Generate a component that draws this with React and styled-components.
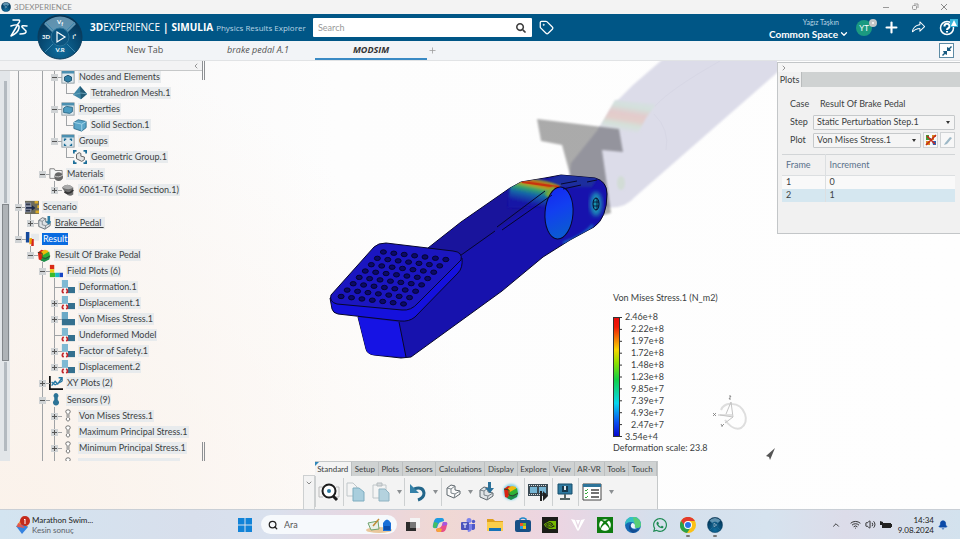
import React from 'react';
import styled, { createGlobalStyle, css } from 'styled-components';
import { FaSearch, FaWhatsapp, FaXbox } from 'react-icons/fa';
import { PiShareFat } from 'react-icons/pi';
import { SiNvidia } from 'react-icons/si';
import {
  Bell,
  ChevronDown,
  ChevronLeft,
  ChevronRight,
  ChevronUp,
  Plus,
  Search,
  Tag,
  Volume2,
  Wifi,
} from 'lucide-react';

/* Tree guides, one character per 12px column:
   | line, T tee, L elbow, + - toggles on a running line, p m toggles ending it */
const treeRows = [
  { guides: '| |-', icon: 'mesh', label: 'Nodes and Elements' },
  { guides: '| ||L', icon: 'tetra', label: 'Tetrahedron Mesh.1' },
  { guides: '| |-', icon: 'props', label: 'Properties' },
  { guides: '| ||L', icon: 'cube', label: 'Solid Section.1' },
  { guides: '| |m', icon: 'groups', label: 'Groups' },
  { guides: '| | L', icon: 'geom', label: 'Geometric Group.1' },
  { guides: '| m', icon: 'materials', label: 'Materials', gap: true },
  { guides: '|  p', icon: 'sphere', label: '6061-T6 (Solid Section.1)' },
  { guides: '-', icon: 'scenario', label: 'Scenario', gap: true },
  { guides: '|p', icon: 'pedal', label: 'Brake Pedal ', underline: true },
  { guides: 'm', icon: 'result', label: 'Result', selected: true },
  { guides: ' m', icon: 'rainbow', label: 'Result Of Brake Pedal' },
  { guides: '  -', icon: 'field', label: 'Field Plots (6)' },
  { guides: '  |T', icon: 'plot', label: 'Deformation.1' },
  { guides: '  |+', icon: 'plot', label: 'Displacement.1' },
  { guides: '  |+', icon: 'plotOn', label: 'Von Mises Stress.1' },
  { guides: '  |T', icon: 'plot', label: 'Undeformed Model' },
  { guides: '  |+', icon: 'plot', label: 'Factor of Safety.1' },
  { guides: '  |p', icon: 'plot', label: 'Displacement.2' },
  { guides: '  +', icon: 'xy', label: 'XY Plots (2)' },
  { guides: '  -', icon: 'sensors', label: 'Sensors (9)', gap: true },
  { guides: '  |+', icon: 'sensor', label: 'Von Mises Stress.1' },
  { guides: '  |+', icon: 'sensor', label: 'Maximum Principal Stress.1' },
  { guides: '  |+', icon: 'sensor', label: 'Minimum Principal Stress.1' },
  { guides: '  |+', icon: 'sensor', label: '' },
];

const legendValues = [
  '2.46e+8',
  '2.22e+8',
  '1.97e+8',
  '1.72e+8',
  '1.48e+8',
  '1.23e+8',
  '9.85e+7',
  '7.39e+7',
  '4.93e+7',
  '2.47e+7',
  '3.54e+4',
];

const sections = [
  'Standard',
  'Setup',
  'Plots',
  'Sensors',
  'Calculations',
  'Display',
  'Explore',
  'View',
  'AR-VR',
  'Tools',
  'Touch',
];

const Window = () => (
  <>
    <rect x="1" y="1" width="14" height="14" fill="#dfe9ee" stroke="#8b979e" />
    <rect x="1" y="1" width="14" height="3" fill="#4b8fb0" />
  </>
);

const Cube = () => (
  <>
    <path d="M1 5l5-3 9 2v7l-5 4-9-3z" fill="#5aa5c8" stroke="#2d6b8b" />
    <path d="M1 5l9 2 5-3M10 7v8" fill="none" stroke="#a9d8ec" />
  </>
);

const Bracket = ({ fill = '#dfe3e6' }) => (
  <>
    <path
      d="M2 5l4-3 4 1v4l5 1v3l-6 4-7-3z"
      fill={fill}
      stroke="#5d666c"
      strokeLinejoin="round"
    />
    <path d="M2 5l4 1v4l4 1 5-3M6 6l4-3M10 11l-1 4" fill="none" stroke="#7b848a" />
  </>
);

const RainbowPart = () => (
  <>
    <path d="M1 5l4-3 4 1-2 12-5-2z" fill="#d92313" />
    <path d="M5 4l4-2 4 1v3l-5 3-2 4z" fill="#f0b90c" />
    <path d="M7 8l7-4 1 6-6 5-4-1z" fill="#2eb135" />
    <path d="M6 12l9-3-1 4-6 3-4-2z" fill="#1b8f4a" />
    <path d="M1 5l5 1v5l4 1 5-3" fill="none" stroke="#30402a" />
  </>
);

const treeIcons = {
  mesh: (
    <>
      <Window />
      <path d="M4 8l4-2 4 2v4l-4 2-4-2z" fill="#2f7fa6" stroke="#1b4f6b" />
    </>
  ),
  tetra: (
    <>
      <path d="M8 0l8 9-7 6-9-5z" fill="#3f86a6" />
      <path d="M8 0l1 15 7-6z" fill="#235a75" />
      <path d="M0 10l9-2 7 1" stroke="#6fa6bd" fill="none" />
    </>
  ),
  props: (
    <>
      <Window />
      <path d="M3 7l3-2 7 1v5l-3 2-7-1z" fill="#4d9dc2" stroke="#276481" />
    </>
  ),
  cube: <Cube />,
  groups: (
    <>
      <Window />
      <path
        d="M4 8V6h2M10 6h2v2M12 11v2h-2M6 13H4v-2"
        fill="none"
        stroke="#1c6e98"
        strokeWidth="1.500"
      />
    </>
  ),
  geom: (
    <>
      <path
        d="M1 4V1h3M12 1h3v3M15 12v3h-3M4 15H1v-3"
        fill="none"
        stroke="#1c6e98"
        strokeWidth="2"
      />
      <path d="M4 5l3-2 2 1v3l4 1v3l-3 2-6-3z" fill="#e4e4e4" stroke="#555" />
    </>
  ),
  materials: (
    <>
      <path d="M1 2h5l1 2h8v9H1z" fill="#f6f6f6" stroke="#777" />
      <circle cx="11" cy="11" r="5" fill="#666" />
      <path d="M6 10q5 3 10-1" stroke="#d5d5d5" fill="none" />
    </>
  ),
  sphere: (
    <>
      <path d="M1 5q6-6 13 0v8q-5 4-9-2z" fill="#6d6d6d" />
      <path d="M1 5q6-6 13 0-5 4-13 0z" fill="#aaa" />
      <path d="M4 10q5 4 10-2" stroke="#333" fill="none" strokeWidth="2" />
    </>
  ),
  scenario: (
    <>
      <rect y="1" width="16" height="15" fill="#6b6a5c" />
      <path d="M0 3h7v11H0z" fill="#8e96ad" />
      <path d="M1 5h5M1 12h5" stroke="#333a4a" strokeWidth="2" />
      <path d="M1 8h7V6l4 3-4 3v-2H1z" fill="#1d2a4c" />
      <path d="M11 1h4v3h-4zM12 12h4v3h-4zM14 6h2v3h-2z" fill="#d9aa2a" />
    </>
  ),
  pedal: (
    <>
      <Bracket />
      <path d="M12 0h3v6h2l-4 4-3-4h2z" fill="#2d7ca4" />
    </>
  ),
  result: (
    <>
      <rect x="7" y="2" width="9" height="8" fill="#e6e9ec" />
      <path d="M1 0h4v12H1z" fill="#174a9c" />
      <path d="M5 7h3v7H5z" fill="#e8a20e" />
      <path d="M8 8h2v8H7z" fill="#d3221a" />
    </>
  ),
  rainbow: <RainbowPart />,
  field: (
    <>
      <path d="M1 1h5v5H1z" fill="#d92a16" />
      <path d="M1 6h5v4H1z" fill="#eccb13" />
      <path d="M1 10h6v5H1z" fill="#3ab92e" />
      <path d="M7 10h5v5H7z" fill="#1cb9c6" />
      <path d="M12 10h4v5h-4z" fill="#1746c4" />
    </>
  ),
  plot: (
    <>
      <path d="M1 0h7v9H1z" fill="#7fb9d3" />
      <path d="M8 8h8v7H8z" fill="#34708f" />
      <path d="M3 10q-3 3 0 5M6 10q3 3 0 5" stroke="#c3262b" fill="none" strokeWidth="2" />
    </>
  ),
  plotOn: (
    <>
      <path d="M1 0h7v8h8v7H1z" fill="#34708f" />
      <path d="M1 0h7v8H1z" fill="#6ba9c6" />
    </>
  ),
  xy: (
    <>
      <path d="M1 0v15h15" stroke="#111" strokeWidth="2" fill="none" />
      <path
        d="M3 11l4-5 3 3 5-7M3 7l4 3 8-4M11 2h4v4"
        stroke="#2477a2"
        strokeWidth="1.500"
        fill="none"
      />
    </>
  ),
  sensors: (
    <path d="M8 0a3 3 0 0 1 2 5v3a3.500 3.500 0 1 1-4 0V5a3 3 0 0 1 2-5z" fill="#2d7497" />
  ),
  sensor: (
    <path
      d="M8 1a2 2 0 0 1 1 4v5a2 2 0 1 1-2 0V5a2 2 0 0 1 1-4z"
      fill="#fff"
      stroke="#666"
    />
  ),
};

const CompassIcon = ({ id }) => (
  <svg viewBox="0 0 46 46" width="100%" height="100%" aria-hidden="true">
    <defs>
      <radialGradient id={id} cx="50%" cy="80%" r="80%">
        <stop offset="0" stopColor="#0f6c9c" />
        <stop offset="0.6" stopColor="#07476f" />
        <stop offset="1" stopColor="#042f4e" />
      </radialGradient>
    </defs>
    <circle cx="23" cy="23" r="22" fill={`url(#${id})`} stroke="#0b3c5c" />
    <path d="M7 10a21 21 0 0 1 32 0L30 19a9 9 0 0 0-14 0z" fill="#7fb0cb" opacity="0.750" />
    <circle cx="23" cy="23" r="9" fill="#0c5580" stroke="#2b7298" />
    <path d="M8 8l8 8M38 8l-8 8M8 38l8-8M38 38l-8-8" stroke="#3b86ad" />
    <path d="M20 18l8 5-8 5z" fill="none" stroke="#fff" strokeWidth="1.200" />
  </svg>
);

const padHoles = [];
for (let r = 0; r < 8; r++) {
  for (let c = 0; c < 7; c++) {
    padHoles.push({ x: 383.4 + c * 10.4 - r * 6.04, y: 252 + c * 1.25 + r * 6.35 });
  }
}

const PedalScene = () => (
  <Scene viewBox="206 61 571 400" preserveAspectRatio="xMidYMid slice" role="img" aria-label="Brake pedal">
    <defs>
      <filter id="soft"><feGaussianBlur stdDeviation="1" /></filter>
      <filter id="glow"><feGaussianBlur stdDeviation="2" /></filter>
      <linearGradient id="band" gradientUnits="userSpaceOnUse" x1="541" y1="177" x2="534" y2="211">
        <stop offset="0" stopColor="#3f9a68" />
        <stop offset="0.120" stopColor="#9aa32f" />
        <stop offset="0.200" stopColor="#d0370f" />
        <stop offset="0.280" stopColor="#b7a51c" />
        <stop offset="0.380" stopColor="#38a767" />
        <stop offset="0.550" stopColor="#1466a8" />
        <stop offset="0.850" stopColor="#1512a6" />
      </linearGradient>
      <linearGradient id="ghostBand" gradientUnits="userSpaceOnUse" x1="628" y1="95" x2="622" y2="132">
        <stop offset="0" stopColor="#dcdce9" />
        <stop offset="0.300" stopColor="#d3e1dc" />
        <stop offset="0.500" stopColor="#e3cbcc" />
        <stop offset="0.650" stopColor="#e3cecb" />
        <stop offset="0.800" stopColor="#d4e1d9" />
        <stop offset="1" stopColor="#dcdce9" />
      </linearGradient>
      <linearGradient id="hole" x1="0" y1="0" x2="0.300" y2="1">
        <stop offset="0" stopColor="#1425f0" />
        <stop offset="0.500" stopColor="#123ff0" />
        <stop offset="1" stopColor="#0b59d4" />
      </linearGradient>
      <clipPath id="bodyClip">
        <path d="M428 248L510 188 521 182 545 178 561 175 595 178Q607 181 607 194 607 218 594 227L570 240 543 257 411 358 372 355 358 317z" />
      </clipPath>
    </defs>
    <path
      d="M663 59L633 85 615 103 600 127 571 163 568 185 605 207Q624 210 636 196L780 70V59z"
      fill="#dcdce9"
      filter="url(#soft)"
    />
    <path
      d="M615 100L606 116 598 130 638 133 646 118 656 104z"
      fill="url(#ghostBand)"
      filter="url(#soft)"
    />
    <path d="M720 61Q672 88 655 106M654 114Q670 130 666 150" stroke="#d7d7e5" fill="none" />
    <ellipse cx="621" cy="183" rx="4" ry="7" fill="#d2dcd6" filter="url(#soft)" />
    <path
      d="M537 119L619 129 623 152 602 150 611 213 604 215 571 178 562 145 541 141z"
      fill="#000"
      opacity="0.320"
      filter="url(#soft)"
    />
    <path
      d="M428 248L461 222 510 188 521 182 545 178 561 175 595 178Q607 181 607 194 607 218 594 227L570 240 543 257 502 291 411 357 401 358 374 355Q367 354 366 349L358 317z"
      fill="#1712ad"
      stroke="#07072b"
    />
    <g clipPath="url(#bodyClip)">
      <path d="M428 248L510 188 521 182 545 178 561 185 495 231 457 258z" fill="#19149c" />
      <path d="M508 208L510 186 524 177 562 184 550 206z" fill="url(#band)" filter="url(#soft)" />
      <path d="M548 180L562 174 598 177 592 187 563 187z" fill="#1e2f9e" filter="url(#soft)" />
      <path d="M522 182L559 187" stroke="#c8330f" strokeWidth="2" />
      <path d="M553 186l-8 8 4 4 8-8z" fill="#7da83e" filter="url(#soft)" />
      <ellipse cx="596" cy="204" rx="6" ry="12" fill="#1a8db8" filter="url(#glow)" />
      <path
        d="M563 243q20-6 30-18"
        stroke="#195fc4"
        strokeWidth="3"
        fill="none"
        filter="url(#soft)"
      />
    </g>
    <ellipse
      cx="559"
      cy="213"
      rx="14"
      ry="26"
      fill="url(#hole)"
      stroke="#07072b"
      transform="rotate(4 559 213)"
    />
    <ellipse cx="596" cy="204" rx="3" ry="6" fill="#1792ae" stroke="#07072b" />
    <path d="M593 202h6M593 206h6M597 198v12" stroke="#07072b" strokeWidth="0.800" />
    <path
      d="M457 258L495 231M497 227L545 191M502 230L552 195M561 184l16-3M563 189l18-4M587 182l10-2"
      stroke="#07072b"
      fill="none"
    />
    <path d="M358 317L399 322 406 357 374 355Q367 354 366 349z" fill="#1613e4" />
    <path d="M399 322L406 357" stroke="#07072b" />
    <path
      d="M330 298L332 309Q333 313 338 314L400 321Q409 322 415 317L458 273Q463 268 462 258z"
      fill="#1511dc"
      stroke="#07072b"
    />
    <path
      d="M331 295L374 247Q378 243 386 243L453 251Q463 252 461 260L418 303Q411 311 402 310L337 304Q329 302 331 295z"
      fill="#1b16c0"
      stroke="#07072b"
    />
    {padHoles.map((h, i) => (
      <ellipse key={i} cx={h.x} cy={h.y} rx="3" ry="2.200" fill="#0b0968" stroke="#050530" />
    ))}
    <g fill="none" stroke="#dedede">
      <path d="M721 410q3-7 11-6 9 0 13 10 3 9-4 14-8 3-16-8" strokeWidth="2" />
      <path d="M731 402l-5 12M731 402l2 15-13-2M733 417l-8 6M718 415h14" stroke="#c4c4c4" />
      <path
        d="M729 396h2l-2 3h2M713 413l3 3M716 413l-3 3M721 424l1 2 2-2M722 426v1"
        stroke="#777"
        strokeWidth="0.800"
      />
    </g>
    <path d="M775 448l-9 8 3 1 1 3z" fill="#555" />
  </Scene>
);

const Caret = () => (
  <svg width="5" height="4" viewBox="0 0 5 4" aria-hidden="true">
    <path d="M0 0h5L2.500 4z" fill="#8b8f92" />
  </svg>
);

const Tool = ({ label, width = 22, children }) => (
  <ToolButton aria-label={label} $width={width}>
    <svg width={width} height="22" viewBox={`0 0 ${width} 22`} aria-hidden="true">
      {children}
    </svg>
  </ToolButton>
);

const toggles = '+-pm';

const TreeRow = ({ row }) => (
  <Row $gap={row.gap}>
    {row.guides.split('').map((g, i) => (
      <Guide key={i} $kind={g}>
        {toggles.includes(g) && (
          <Toggle aria-label="Toggle">
            <svg width="7" height="7" viewBox="0 0 7 7">
              <path d={g === '+' || g === 'p' ? 'M1 3.500h5M3.500 1v5' : 'M1 3.500h5'} stroke="#555" />
            </svg>
          </Toggle>
        )}
      </Guide>
    ))}
    <NodeIcon viewBox="0 0 16 16">{treeIcons[row.icon]}</NodeIcon>
    <NodeLabel $selected={row.selected} $underline={row.underline} $empty={!row.label}>
      {row.label}
    </NodeLabel>
  </Row>
);

const App = () => {
  return (
    <>
      <GlobalStyle />
      <Page>
        <TitleBar>
          <TitleIcon><CompassIcon id="cmpSmall" /></TitleIcon>
          <span>3DEXPERIENCE</span>
          <WindowButtons>
            <PlainButton aria-label="Minimize">
              <svg width="8" height="8"><path d="M1 4.500h6" stroke="#999" /></svg>
            </PlainButton>
            <PlainButton aria-label="Restore">
              <svg width="8" height="8" fill="none" stroke="#999">
                <rect x="1.500" y="2.500" width="4" height="4" rx="1" />
                <path d="M3 1h4v4" />
              </svg>
            </PlainButton>
            <PlainButton aria-label="Close">
              <svg width="8" height="8"><path d="M1 1l6 6M7 1L1 7" stroke="#888" /></svg>
            </PlainButton>
          </WindowButtons>
        </TitleBar>

        <Header>
          <Brand>
            <Logo viewBox="0 0 20 20">
              <path
                d="M4 2h6q2 1-2 5M2 8q9-3 8 2-1 5-8 8Q5 13 8 8M18 8q-6-1-5 1l4 4q1 3-6 3"
                fill="none"
                stroke="#fff"
                strokeWidth="1.500"
                strokeLinecap="round"
                strokeLinejoin="round"
              />
            </Logo>
            <BrandText>
              <span><b>3D</b>EXPERIENCE</span>
              <b>|</b>
              <b>SIMULIA</b>
              <AppName>Physics Results Explorer</AppName>
            </BrandText>
          </Brand>
          <SearchBox>
            <SearchInput type="search" placeholder="Search" aria-label="Search" />
            <FaSearch size={10} color="#3d3d3d" />
          </SearchBox>
          <PlainButton aria-label="Tags">
            <Tag size={15} color="#fff" strokeWidth={2} />
          </PlainButton>
          <Account>
            <UserSpace>
              <UserName>Yağız Taşkın</UserName>
              <SpaceButton>
                Common Space <ChevronDown size={10} strokeWidth={3} />
              </SpaceButton>
            </UserSpace>
            <Avatar>
              YT
              <Status />
            </Avatar>
            <PlainButton aria-label="Add"><Plus size={17} color="#fff" strokeWidth={3} /></PlainButton>
            <PlainButton aria-label="Share"><PiShareFat size={15} color="#fff" /></PlainButton>
            <HelpButton aria-label="Help">
              <svg width="16" height="16" viewBox="0 0 16 16" fill="none" stroke="#fff" strokeWidth="1.500">
                <circle cx="8" cy="8" r="6.500" />
                <path d="M5.500 6.500a2.500 2.500 0 1 1 3.500 2q-1 .5-1 1.500M8 11v1.500" strokeWidth="2" />
              </svg>
              <Alert>
                <svg width="8" height="8" viewBox="0 0 8 8"><path d="M4 1l3 6H1z" fill="#fff" /></svg>
              </Alert>
            </HelpButton>
          </Account>
        </Header>
        <Compass aria-label="Compass">
          <CompassIcon id="cmp" />
          <CompassWord $side="top">V<sub>f</sub></CompassWord>
          <CompassWord $side="left">3D</CompassWord>
          <CompassWord $side="right">i²</CompassWord>
          <CompassWord $side="bottom">V.R</CompassWord>
        </Compass>

        <TabBar>
          <DocTab>New Tab</DocTab>
          <DocTab $italic>brake pedal A.1</DocTab>
          <DocTab $italic $active>MODSIM</DocTab>
          <PlainButton aria-label="New tab"><Plus size={9} color="#999" /></PlainButton>
          <ShrinkButton aria-label="Exit full view">
            <svg width="12" height="12" viewBox="0 0 12 12" fill="#175a80">
              <path d="M11 2L9 4l1 2H6V2l2 1 2-2zM1 10l2-2-1-2h4v4L4 9l-2 2z" />
            </svg>
          </ShrinkButton>
        </TabBar>

        <Workspace>
          <TreePanel>
            <TreeColumn>
              <TreeHead>
                <PlainButton aria-label="Collapse tree"><ChevronLeft size={8} color="#666" /></PlainButton>
              </TreeHead>
              <TreeBody>
                <ScrollTrack>
                  <TrackLine $grow={11} />
                  <Thumb />
                  <TrackLine $grow={8} />
                </ScrollTrack>
                <TreeList>
                  {treeRows.map((row, i) => (
                    <TreeRow key={i} row={row} />
                  ))}
                </TreeList>
              </TreeBody>
            </TreeColumn>
            <Splitter>
              <SplitGrip />
              <SplitGrip />
            </Splitter>
          </TreePanel>

          <Viewport>
            <PedalScene />
            <Legend>
              <p>Von Mises Stress.1 (N_m2)</p>
              <Scale>
                <ScaleBar width="10" height="120" viewBox="0 0 10 120">
                  <defs>
                    <linearGradient id="scale" x1="0" y1="0" x2="0" y2="1">
                      <stop offset="0" stopColor="#e80c0c" />
                      <stop offset="0.080" stopColor="#f01b06" />
                      <stop offset="0.270" stopColor="#f9d500" />
                      <stop offset="0.380" stopColor="#8fe000" />
                      <stop offset="0.520" stopColor="#12d046" />
                      <stop offset="0.720" stopColor="#06d6ee" />
                      <stop offset="0.880" stopColor="#0a50f0" />
                      <stop offset="1" stopColor="#0806d0" />
                    </linearGradient>
                  </defs>
                  <rect x="0.500" y="0.500" width="6" height="119" fill="url(#scale)" stroke="#333" />
                  {legendValues.map((v, i) => (
                    <path key={v} d={`M${i % 10 ? 6 : 0} ${0.5 + i * 11.9}h${i % 10 ? 3 : 9}`} stroke="#333" />
                  ))}
                </ScaleBar>
                <ScaleValues>
                  {legendValues.map((v) => (
                    <li key={v}>{v}</li>
                  ))}
                </ScaleValues>
              </Scale>
              <ScaleNote>Deformation scale: 23.8</ScaleNote>
            </Legend>
          </Viewport>

          <SidePanel>
            <SideHead>
              <PlainButton aria-label="Collapse panel"><ChevronRight size={8} color="#666" /></PlainButton>
            </SideHead>
            <SideTabs>
              <SideTab>Plots</SideTab>
            </SideTabs>
            <SideForm>
              <Field>
                <FieldName as="span">Case</FieldName>
                <CaseName>Result Of Brake Pedal</CaseName>
              </Field>
              <Field>
                <FieldName htmlFor="step">Step</FieldName>
                <SelectWrap>
                  <Select id="step"><option>Static Perturbation Step.1</option></Select>
                </SelectWrap>
              </Field>
              <Field>
                <FieldName htmlFor="plot">Plot</FieldName>
                <SelectWrap>
                  <Select id="plot"><option>Von Mises Stress.1</option></Select>
                </SelectWrap>
                <SmallButton aria-label="Plot options">
                  <svg width="12" height="12" viewBox="0 0 12 12">
                    <path d="M1 1h3v3h2v2H1z" fill="#3f9c36" />
                    <path d="M7 6V1h4v2H9v3zM1 11V7h4v4z" fill="#d68a1c" />
                    <path d="M7 7h4v4H8z" fill="#2a63b8" />
                    <path d="M1 11L11 1M2 2l8 8" stroke="#c8281c" strokeWidth="1.500" />
                  </svg>
                </SmallButton>
                <SmallButton aria-label="Edit plot">
                  <svg width="12" height="12" viewBox="0 0 12 12">
                    <path d="M3 9l5-6 2 1-5 6-3 1z" fill="#9db8c6" />
                  </svg>
                </SmallButton>
              </Field>
            </SideForm>
            <Frames>
              <thead>
                <tr><th>Frame</th><th>Increment</th></tr>
              </thead>
              <tbody>
                <tr><td>1</td><td>0</td></tr>
                <FrameSelected><td>2</td><td>1</td></FrameSelected>
              </tbody>
            </Frames>
          </SidePanel>
        </Workspace>

        <ActionArea>
          <BarCollapse aria-label="Collapse action bar"><ChevronDown size={8} color="#555" /></BarCollapse>
          <ActionBar>
            <SectionTabs>
              {sections.map((s, i) => (
                <SectionTab key={s} $active={i === 0}>{s}</SectionTab>
              ))}
            </SectionTabs>
            <Tools>
              <ToolGroup $width={28}>
                <Tool label="Fit all">
                  <path d="M1 6h4M1 16h4M1 6v10M21 6v10h-3M21 6h-3" stroke="#bbb" fill="none" />
                  <circle cx="11" cy="10" r="6.500" fill="#fff" stroke="#1c1c1c" strokeWidth="2" />
                  <path d="M15 15l4 4" stroke="#1c1c1c" strokeWidth="3" />
                  <circle cx="11" cy="10" r="2" fill="#2c7ba2" />
                </Tool>
              </ToolGroup>
              <ToolGroup $width={61}>
                <Tool label="Copy">
                  <path d="M2 2h6l4 4v9H2z" fill="#f4f4f4" stroke="#bfc6c9" />
                  <path d="M8 7h6l5 4v9H8z" fill="#a9cedd" stroke="#7eadc0" />
                </Tool>
                <Tool label="Paste">
                  <path d="M2 4h13v13H2z" fill="#f4f4f4" stroke="#bfc6c9" />
                  <path d="M6 2h5v3H6z" fill="#d6dadc" stroke="#b5bbbe" />
                  <path d="M8 8h6l4 4v8H8z" fill="#b4d2de" stroke="#8fb3c2" />
                </Tool>
                <Caret />
              </ToolGroup>
              <ToolGroup $width={37}>
                <Tool label="Undo">
                  <path d="M7 8q9-3 10 4 0 5-6 7" stroke="#22668a" strokeWidth="3" fill="none" />
                  <path d="M3 3v9h9z" fill="#3581a8" />
                </Tool>
                <Caret />
              </ToolGroup>
              <ToolGroup $width={83}>
                <Tool label="Part">
                  <g transform="translate(2 2)"><Bracket fill="#fafafa" /></g>
                </Tool>
                <Caret />
                <Tool label="Import result">
                  <g transform="translate(3 4)"><Bracket /></g>
                  <path d="M13 1h3v6h3l-4 5-5-5h3z" fill="#2b719a" />
                </Tool>
                <Tool label="Plot display">
                  <circle cx="11" cy="11" r="8" fill="#7fd0e8" filter="url(#soft)" />
                  <g transform="translate(3 3)"><RainbowPart /></g>
                </Tool>
              </ToolGroup>
              <ToolGroup $width={28}>
                <Tool label="Animate">
                  <path d="M1 3h20v12H1z" fill="#3b4b55" />
                  <path d="M3 6h7v6H3zM12 6h7v6h-7z" fill="#76b5d4" />
                  <path d="M2 4.500h18M2 13.500h18" stroke="#ddd" strokeDasharray="1 1" />
                  <path d="M13 10h2v10h-2zM16 10l5 5-5 5z" fill="#222" />
                </Tool>
              </ToolGroup>
              <ToolGroup $width={26}>
                <Tool label="Display">
                  <path d="M4 3h14v10H4z" fill="#2e799f" stroke="#174e6c" />
                  <path d="M8 5h6v6H8z" fill="#16384c" />
                  <path d="M10 5h2v4h-2z" fill="#e0e8ec" />
                  <path d="M10 13h2v4h-2zM6 17h10v2H6z" fill="#566" />
                </Tool>
              </ToolGroup>
              <ToolGroup $width={38}>
                <Tool label="Options">
                  <path d="M2 3h18v16H2z" fill="#fff" stroke="#444" />
                  <path d="M2 3h18v3H2z" fill="#2d749a" />
                  <path d="M10 9h8M10 12h8M10 16h8" stroke="#444" strokeWidth="1.500" />
                  <path d="M4 9l1 1 2-2M4 12l1 1 2-2M4 16l1 1 2-2" stroke="#3aa640" fill="none" />
                </Tool>
                <Caret />
              </ToolGroup>
            </Tools>
          </ActionBar>
        </ActionArea>

        <Taskbar>
          <Widget>
            <svg width="16" height="20" viewBox="0 0 16 20">
              <path d="M8 1L1 12h12z" fill="#f0903a" />
              <path d="M1 11l6-2 6 3-6 7z" fill="#3583e0" />
              <path d="M3 8l4 2 3 3-8-1z" fill="#e3574f" />
              <circle cx="10" cy="6" r="5" fill="#c42b1c" />
              <path d="M9 5l1-1v5" stroke="#fff" fill="none" />
            </svg>
            <WidgetText>
              <strong>Marathon Swim...</strong>
              <span>Kesin sonuç</span>
            </WidgetText>
          </Widget>

          <Dock>
            <PlainButton aria-label="Start">
              <svg width="16" height="16" viewBox="0 0 16 16">
                <path
                  d="M1 1h6.500v6.500H1zM8.500 1H15v6.500H8.500zM1 8.500h6.500V15H1zM8.500 8.500H15V15H8.500z"
                  fill="#1183d8"
                />
              </svg>
            </PlainButton>
            <TaskSearch>
              <Search size={10} color="#222" strokeWidth={3} />
              <TaskInput placeholder="Ara" aria-label="Ara" />
              <svg width="28" height="16" viewBox="0 0 28 16">
                <ellipse cx="14" cy="13" rx="13" ry="3" fill="#e9c79b" />
                <path d="M3 6l10-2 1 8-8 1z" fill="#e9efe9" stroke="#6da36d" />
                <path d="M8 9l6-7" stroke="#c08a35" strokeWidth="1.500" />
                <path d="M18 14V6q4-7 8 0v8z" fill="#1a6fd8" />
                <path d="M19 9h6v4h-6z" fill="#0d4fae" />
              </svg>
            </TaskSearch>
            <DockApps>
              <DockApp href="#taskview" aria-label="Task view">
                <svg viewBox="0 0 16 16">
                  <path d="M5 1h10v10H5z" fill="#f4f4f4" />
                  <path d="M1 5h10v9H1z" fill="#2b2b2b" />
                  <path d="M5 5h6v6H5z" fill="#777" />
                </svg>
              </DockApp>
              <DockApp href="#copilot" aria-label="Copilot">
                <svg viewBox="0 0 16 16">
                  <path d="M5 1h5q2 0 2 3l-3 1q-2 0-3 3l-1 3H3q-3 0-2-3l1-4q1-3 3-3z" fill="#1f9be0" />
                  <path d="M2 5l-1 4q0 3 3 2l2-5z" fill="#46bf62" />
                  <path
                    d="M11 15H6q-2 0-2-3l3-1q2 0 3-3l1-3h2q3 0 2 3l-1 4q-1 3-3 3z"
                    fill="#e8508a"
                  />
                  <path d="M6 15q-2 0-2-3l3-1 3 1-1 3z" fill="#f7a53a" />
                  <path d="M11 5h2q3 0 2 3l-5 1z" fill="#a557e0" />
                </svg>
              </DockApp>
              <DockApp href="#teams" aria-label="Teams">
                <svg viewBox="0 0 16 16">
                  <circle cx="9" cy="3.500" r="2.500" fill="#7b83eb" />
                  <circle cx="13.500" cy="4.500" r="1.700" fill="#5059c9" />
                  <path d="M6 7h6v5q-1 3-4 3z" fill="#7b83eb" />
                  <path d="M12 7h3v4q0 2-3 2z" fill="#5059c9" />
                  <rect x="1" y="5" width="8" height="8" rx="1" fill="#4b53bc" />
                  <path d="M3 7h4M5 7v4" stroke="#fff" />
                </svg>
              </DockApp>
              <DockApp href="#files" aria-label="File Explorer">
                <svg viewBox="0 0 16 16">
                  <path d="M0 2h6l2 2h8v4H0z" fill="#e0a01c" />
                  <path d="M0 5h16v9H0z" fill="#fbce4b" />
                  <path d="M2 11h12v3H2z" fill="#1572b8" />
                </svg>
              </DockApp>
              <DockApp href="#store" aria-label="Store">
                <svg viewBox="0 0 16 16">
                  <path d="M5 4V2q3-2 6 0v2" stroke="#1f87c9" fill="none" strokeWidth="1.500" />
                  <rect x="0" y="3" width="16" height="12" rx="2" fill="#174f86" />
                  <path d="M5 6h3v3H5z" fill="#f0562b" />
                  <path d="M8 6h3v3H8z" fill="#7dbb28" />
                  <path d="M5 9h3v3H5z" fill="#25a2e2" />
                  <path d="M8 9h3v3H8z" fill="#fabb1c" />
                </svg>
              </DockApp>
              <DockApp href="#nvidia" aria-label="Nvidia" $bg="#1b1d18">
                <SiNvidia size={12} color="#76b900" />
              </DockApp>
              <DockApp href="#vanguard" aria-label="Vanguard">
                <svg viewBox="0 0 16 16">
                  <path d="M1 2l4 1 3 9 3-9 4-1-6 11-1 1-1-1zM6 3h4L8 8z" fill="#fff" />
                </svg>
              </DockApp>
              <DockApp href="#xbox" aria-label="Xbox" $bg="#107c10">
                <FaXbox size={12} color="#fff" />
              </DockApp>
              <DockApp href="#edge" aria-label="Edge">
                <svg viewBox="0 0 16 16">
                  <circle cx="8" cy="8" r="8" fill="#1769b5" />
                  <path d="M0 8a8 8 0 0 1 16-1q0 4-4 4-3 0-2-2 0-4-4-4-4 0-6 3z" fill="#36bfc4" />
                  <path d="M8 0a8 8 0 0 1 8 7q0 4-4 4-3 0-2-2z" fill="#58cd77" />
                  <path d="M7 6q-3 3 0 6 3 2 7 0-2 3-6 4-4-2-4-6 0-3 3-4z" fill="#124c92" />
                  <path d="M7 6q3 0 3 3-1 2 2 2-4 2-6-1-1-2 1-4z" fill="#eaf4fb" />
                </svg>
              </DockApp>
              <DockApp href="#whatsapp" aria-label="WhatsApp">
                <FaWhatsapp size={16} color="#1c8a52" />
              </DockApp>
              <DockApp href="#chrome" aria-label="Chrome" $running>
                <svg viewBox="0 0 16 16">
                  <circle cx="8" cy="8" r="8" fill="#fbc116" />
                  <path d="M1 4a8 8 0 0 1 14 0H8L5 10z" fill="#e33b2e" />
                  <path d="M1 4a8 8 0 0 0 6 12l4-6-6-1z" fill="#2ba24c" />
                  <circle cx="8" cy="8" r="4" fill="#fff" />
                  <circle cx="8" cy="8" r="3" fill="#2b73e8" />
                </svg>
              </DockApp>
              <DockApp href="#3dexperience" aria-label="3DEXPERIENCE" $running>
                <CompassIcon id="cmpDock" />
              </DockApp>
            </DockApps>
          </Dock>

          <Tray>
            <ChevronUp size={10} color="#222" />
            <TrayIcons>
              <Wifi size={11} color="#222" />
              <Volume2 size={11} color="#222" />
              <svg width="12" height="10" viewBox="0 0 12 10">
                <path d="M2 3h9v5H2zM0 1l3 1v3H0z" fill="#222" />
                <path d="M11 4h1v3h-1z" fill="#222" />
              </svg>
            </TrayIcons>
            <Clock>
              <span>14:34</span>
              <span>9.08.2024</span>
            </Clock>
            <Bell size={10} color="#0b4aa8" fill="#0b4aa8" />
          </Tray>
        </Taskbar>
      </Page>
    </>
  );
};

export default App;

const GlobalStyle = createGlobalStyle`
  * {
    box-sizing: border-box;
  }
  body {
    margin: 0;
    font-family: Lato, 'Open Sans', sans-serif;
    font-size: 9px;
    line-height: 12px;
    color: #3c3f42;
  }
  p, ul {
    margin: 0;
    padding: 0;
    list-style: none;
  }
  button, input, select {
    font: inherit;
    color: inherit;
  }
  svg {
    display: block;
    flex-shrink: 0;
  }
`;

const Page = styled.div`
  position: relative;
  display: flex;
  flex-direction: column;
  height: 100vh;
  overflow: hidden;
  background:
    radial-gradient(circle at 0 100%, #fbf2ea, transparent 45%),
    linear-gradient(90deg, #f8f7f7, #fdfdfd 35%, #fefefe);
`;

const PlainButton = styled.button`
  display: flex;
  align-items: center;
  justify-content: center;
  padding: 0;
  border: 0;
  background: none;
`;

const TitleBar = styled.div`
  display: flex;
  align-items: center;
  flex: 0 0 14px;
  padding: 0 12px 0 1px;
  gap: 3px;
  background: #f3f3f3;
  color: #8a8a8a;
  font-size: 8px;
`;

const TitleIcon = styled.span`
  width: 10px;
  height: 10px;
`;

const WindowButtons = styled.div`
  display: flex;
  gap: 21px;
  margin-left: auto;
`;

const Header = styled.header`
  display: flex;
  align-items: center;
  flex: 0 0 27px;
  padding-right: 5px;
  background: #005686;
  color: #fff;
`;

const Brand = styled.div`
  display: flex;
  align-items: center;
  flex: 0 0 313px;
  padding-left: 9px;
`;

const Logo = styled.svg`
  width: 20px;
  height: 20px;
  margin-right: 61px;
`;

const BrandText = styled.div`
  display: flex;
  align-items: baseline;
  gap: 3px;
  font-family: 'Open Sans', sans-serif;
  font-size: 10px;
  white-space: nowrap;
`;

const AppName = styled.span`
  font-size: 8px;
  color: #b9d5e4;
`;

const SearchBox = styled.div`
  display: flex;
  align-items: center;
  flex: 0 0 219px;
  height: 19px;
  margin-right: 7px;
  padding: 0 6px 0 5px;
  border-radius: 1px;
  background: #fff;
`;

const SearchInput = styled.input`
  flex: 1;
  min-width: 0;
  padding: 0;
  border: 0;
  outline: 0;
  background: none;
  &::placeholder {
    color: #9a9a9a;
  }
`;

const Account = styled.div`
  display: flex;
  align-items: center;
  gap: 11px;
  margin-left: auto;
`;

const UserSpace = styled.div`
  display: flex;
  flex-direction: column;
  margin-right: -4px;
`;

const UserName = styled.span`
  padding-right: 10px;
  text-align: right;
  font-size: 7px;
  color: #b9d5e4;
`;

const SpaceButton = styled(PlainButton)`
  gap: 1px;
  font-size: 10px;
  font-weight: 700;
`;

const Avatar = styled.span`
  position: relative;
  width: 16px;
  height: 16px;
  border-radius: 50%;
  background: #1b9a80;
  font-size: 8px;
  line-height: 16px;
  text-align: center;
`;

const Status = styled.i`
  position: absolute;
  top: -1px;
  right: -5px;
  width: 8px;
  height: 8px;
  border: 3px solid #c2c5c6;
  border-radius: 50%;
  background: #fff;
`;

const HelpButton = styled(PlainButton)`
  position: relative;
  margin-left: 2px;
`;

const Alert = styled.span`
  position: absolute;
  top: -1px;
  right: -3px;
  background: #37b5da;
`;

const Compass = styled.button`
  position: absolute;
  top: 14px;
  left: 37px;
  width: 46px;
  height: 46px;
  padding: 0;
  border: 0;
  background: none;
  z-index: 2;
`;

const compassSides = {
  top: 'top: 2px; left: 0; right: 0;',
  bottom: 'bottom: 4px; left: 0; right: 0;',
  left: 'top: 17px; left: 5px;',
  right: 'top: 17px; right: 7px;',
};

const CompassWord = styled.span`
  position: absolute;
  ${(p) => compassSides[p.$side]}
  font-size: 6px;
  font-weight: 700;
  text-align: center;
  color: #fff;
`;

const TabBar = styled.nav`
  display: flex;
  align-items: center;
  flex: 0 0 20px;
  padding: 0 6px 0 89px;
  border-bottom: 1px solid #e1e3e5;
  background: #f2f4f7;
`;

const DocTab = styled.button`
  flex: 0 0 112px;
  align-self: stretch;
  margin-right: 1px;
  padding: 0;
  border: 0;
  border-bottom: 2px solid ${(p) => (p.$active ? '#3a8ac4' : 'transparent')};
  background: none;
  color: #555;
  font-family: 'Open Sans', sans-serif;
  ${(p) => p.$italic && 'font-style: italic;'}
  ${(p) => p.$active && 'font-weight: 700; color: #333;'}
`;

const ShrinkButton = styled(PlainButton)`
  width: 15px;
  height: 15px;
  margin-left: auto;
  border: 1px solid #5d8ba5;
  background: #fff;
`;

const Workspace = styled.main`
  display: grid;
  grid-template-columns: 206px 1fr 183px;
  flex: 1;
  min-height: 0;
`;

const TreePanel = styled.aside`
  display: flex;
  min-height: 0;
`;

const TreeColumn = styled.div`
  display: flex;
  flex-direction: column;
  flex: 1;
  min-width: 0;
`;

const TreeHead = styled.div`
  display: flex;
  justify-content: flex-end;
  flex: 0 0 10px;
  padding-right: 2px;
  border-bottom: 1px solid #c6c8c9;
  background: #f3f3f4;
`;

const TreeBody = styled.div`
  display: flex;
  flex: 1;
  min-height: 0;
  overflow: hidden;
`;

const ScrollTrack = styled.div`
  display: flex;
  flex-direction: column;
  align-items: center;
  flex: 0 0 10px;
  gap: 1px;
  padding: 10px 0;
  background: #e2e6e9;
`;

const TrackLine = styled.div`
  flex: ${(p) => p.$grow};
  width: 3px;
  background: #b3bac0;
`;

const Thumb = styled.div`
  flex: 14;
  width: 7px;
  border: 1px solid #82878b;
  background: #aeb3b7;
`;

const TreeList = styled.ul`
  flex: 1;
  min-width: 0;
  margin-top: -2px;
  padding-left: 2px;
`;

const Row = styled.li`
  display: flex;
  align-items: center;
  height: 16px;
  ${(p) => p.$gap && 'margin-top: 1px;'}
`;

const Guide = styled.span`
  position: relative;
  flex: 0 0 12px;
  align-self: stretch;
  ${(p) =>
    p.$kind !== ' ' &&
    css`
      &::before {
        content: '';
        position: absolute;
        left: 6px;
        top: -1px;
        bottom: ${'Lpm'.includes(p.$kind) ? '8px' : '0'};
        border-left: 1px solid #a0a3a6;
      }
    `}
  ${(p) =>
    !' |'.includes(p.$kind) &&
    css`
      &::after {
        content: '';
        position: absolute;
        left: 6px;
        right: -2px;
        top: 8px;
        border-top: 1px solid #a0a3a6;
      }
    `}
`;

const Toggle = styled.button`
  position: absolute;
  z-index: 1;
  top: 5px;
  left: 3px;
  width: 7px;
  height: 7px;
  padding: 0;
  border: 0;
  background: #d0d3d5;
`;

const NodeIcon = styled.svg`
  width: 14px;
  height: 14px;
  margin: 0 3px 0 1px;
`;

const NodeLabel = styled.span`
  padding: 0 1px;
  white-space: pre;
  background: #e8ebed;
  ${(p) => p.$underline && 'text-decoration: underline;'}
  ${(p) => p.$selected && 'background: #0a6be0; color: #fff;'}
  ${(p) => p.$empty && 'width: 102px; height: 12px;'}
`;

const Splitter = styled.div`
  display: flex;
  flex-direction: column;
  justify-content: space-between;
  flex: 0 0 4px;
`;

const SplitGrip = styled.div`
  width: 3px;
  height: 19px;
  border: solid #8d9093;
  border-width: 0 1px;
`;

const Viewport = styled.section`
  position: relative;
  overflow: hidden;
`;

const Scene = styled.svg`
  width: 100%;
  height: 100%;
`;

const Legend = styled.div`
  position: absolute;
  right: 64px;
  bottom: 8px;
  width: 100px;
  white-space: nowrap;
`;

const Scale = styled.div`
  display: flex;
  margin-top: 13px;
`;

const ScaleBar = styled.svg`
  margin-right: 2px;
`;

const ScaleValues = styled.ul`
  margin-top: -6px;
  li {
    padding-left: 6px;
  }
  li:first-child,
  li:last-child {
    padding-left: 0;
  }
`;

const ScaleNote = styled.p`
  line-height: 10px;
`;

const SidePanel = styled.aside`
  align-self: start;
  height: 172px;
  margin-top: 1px;
  border: 1px solid #c3c6c8;
  border-right: 0;
  background: #f1f1f1;
`;

const SideHead = styled.div`
  display: flex;
  height: 9px;
  padding-left: 2px;
  background: #f6f6f6;
`;

const SideTabs = styled.div`
  display: flex;
  height: 15px;
  background: #cfd2d2;
`;

const SideTab = styled.button`
  width: 24px;
  padding: 0;
  border: 0;
  border-right: 1px solid #b9bcbd;
  background: #f1f1f1;
`;

const SideForm = styled.div`
  display: flex;
  flex-direction: column;
  gap: 2px;
  padding: 9px 5px 6px 12px;
`;

const Field = styled.div`
  display: flex;
  align-items: center;
  gap: 2px;
  height: 16px;
`;

const FieldName = styled.label`
  flex: 0 0 21px;
`;

const CaseName = styled.span`
  padding-left: 7px;
`;

const SelectWrap = styled.div`
  position: relative;
  flex: 1;
  &::after {
    content: '';
    position: absolute;
    right: 5px;
    top: 6px;
    border: 2px solid transparent;
    border-top: 3px solid #333;
    pointer-events: none;
  }
`;

const Select = styled.select`
  display: block;
  appearance: none;
  width: 100%;
  height: 15px;
  padding: 0 3px;
  border: 1px solid #c6c9cb;
  border-radius: 1px;
  background: #f5f5f5;
`;

const SmallButton = styled(PlainButton)`
  width: 15px;
  height: 16px;
  border: 1px solid #cfd2d4;
  background: #f7f7f7;
`;

const Frames = styled.table`
  width: 173px;
  margin-left: 4px;
  border-collapse: collapse;
  border-top: 1px solid #d2d5d7;
  th,
  td {
    height: 13px;
    padding: 0 4px;
    border: 0 solid #dcdfe1;
    text-align: left;
  }
  th {
    height: 21px;
    border-bottom-width: 1px;
    color: #58708a;
    font-weight: 400;
  }
  th:first-child,
  td:first-child {
    width: 43px;
    border-right-width: 1px;
  }
  tbody {
    background: #f9f9f9;
  }
`;

const FrameSelected = styled.tr`
  background: #d5e7f0;
`;

const ActionArea = styled.section`
  display: flex;
  align-items: flex-end;
  justify-content: center;
  flex: 0 0 48px;
`;

const BarCollapse = styled(PlainButton)`
  align-items: flex-start;
  width: 12px;
  height: 34px;
  padding-top: 3px;
  border: 1px solid #cdd0d1;
  border-bottom: 0;
  background: #f3f3f3;
`;

const ActionBar = styled.div`
  align-self: stretch;
  width: 343px;
  border-right: 1px solid #c5c8c9;
  background: #f3f3f3;
`;

const SectionTabs = styled.div`
  display: flex;
  height: 15px;
  border-top: 1px solid #c5c8c9;
`;

const SectionTab = styled.button`
  position: relative;
  flex: 1 1 auto;
  padding: 0;
  border: 0;
  border-right: 1px solid #bcbfc0;
  background: #cfd2d2;
  font-size: 8px;
  ${(p) =>
    p.$active &&
    css`
      background: #f3f3f3;
      &::before {
        content: '';
        position: absolute;
        top: 0;
        left: 0;
        border: 2px solid #2f86b8;
        border-right-color: transparent;
        border-bottom-color: transparent;
      }
    `}
`;

const Tools = styled.div`
  display: flex;
  align-items: center;
  height: 31px;
  border-left: 1px solid #cdd0d1;
`;

const ToolGroup = styled.div`
  display: flex;
  align-items: center;
  justify-content: space-around;
  flex: 0 0 ${(p) => p.$width}px;
  height: 28px;
  border-right: 1px solid #cdd0d1;
  &:last-child {
    border-right: 0;
  }
`;

const ToolButton = styled(PlainButton)`
  width: ${(p) => p.$width}px;
`;

const Taskbar = styled.footer`
  display: grid;
  grid-template-columns: 1fr auto 1fr;
  align-items: center;
  flex: 0 0 30px;
  padding: 0 12px;
  border-top: 1px solid #c9cfd6;
  background: linear-gradient(90deg, #d3e4f0, #d8dfec 20%, #d9e1ee 28%, #e8d6e0 38%, #f0d8d3 46%, #ecd5e2 58%, #d5dfec 68%, #d6e3ef 80%, #dcdce9 88%, #d3e2ee);
`;

const Widget = styled.div`
  display: flex;
  align-items: center;
  gap: 1px;
  padding-left: 3px;
`;

const WidgetText = styled.div`
  display: flex;
  flex-direction: column;
  font-size: 8px;
  line-height: 10px;
  color: #5c6268;
  strong {
    font-weight: 400;
    color: #222;
  }
`;

const Dock = styled.div`
  display: flex;
  align-items: center;
  gap: 8px;
`;

const TaskSearch = styled.label`
  display: flex;
  align-items: center;
  width: 136px;
  height: 19px;
  padding: 0 4px 0 7px;
  gap: 6px;
  border-radius: 10px;
  background: #f6f9fc;
`;

const TaskInput = styled.input`
  flex: 1;
  min-width: 0;
  padding: 0;
  border: 0;
  outline: 0;
  background: none;
  &::placeholder {
    color: #555;
  }
`;

const DockApps = styled.div`
  display: flex;
  justify-content: space-between;
  width: 318px;
`;

const DockApp = styled.a`
  position: relative;
  display: flex;
  align-items: center;
  justify-content: center;
  width: 16px;
  height: 16px;
  background: ${(p) => p.$bg || 'none'};
  ${(p) =>
    p.$running &&
    css`
      &::after {
        content: '';
        position: absolute;
        bottom: -4px;
        width: 4px;
        height: 2px;
        border-radius: 1px;
        background: #777;
      }
    `}
`;

const Tray = styled.div`
  display: flex;
  align-items: center;
  justify-content: flex-end;
  gap: 4px;
`;

const TrayIcons = styled.div`
  display: flex;
  align-items: center;
  gap: 4px;
  margin: 0 2px 0 5px;
`;

const Clock = styled.time`
  display: flex;
  flex-direction: column;
  font-size: 8px;
  line-height: 10px;
  text-align: right;
  color: #222;
`;
